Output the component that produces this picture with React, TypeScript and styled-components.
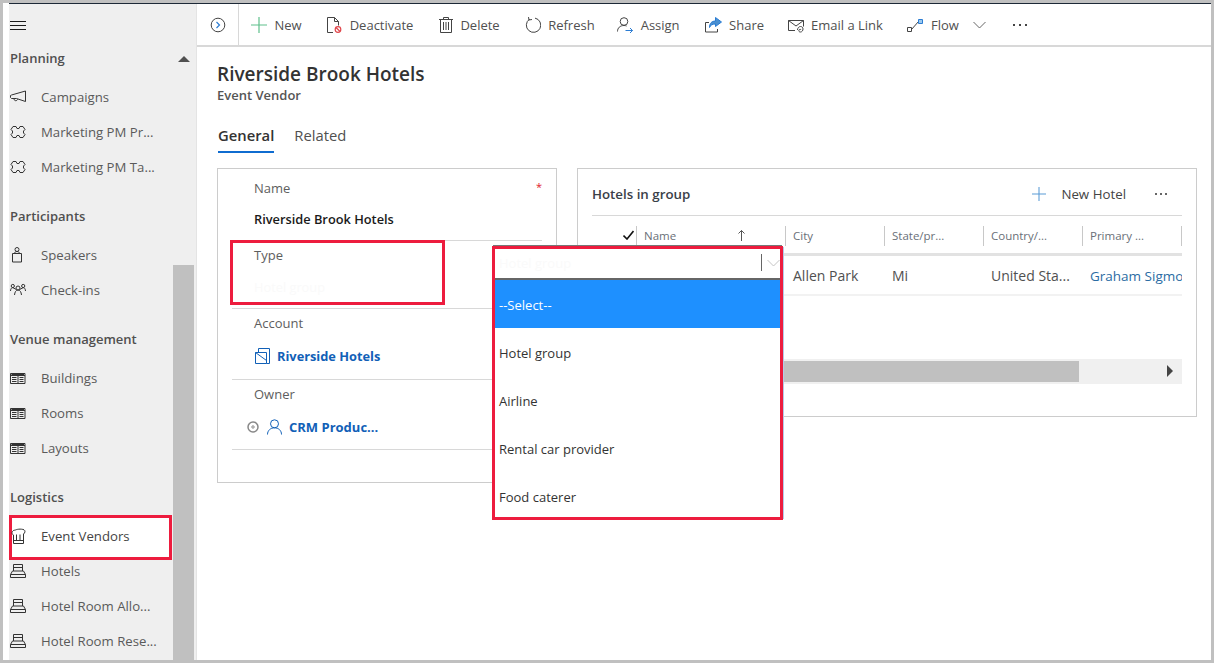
import { FC, ReactNode } from "react";
import styled, { createGlobalStyle } from "styled-components";

const FONT = `"Open Sans", "Noto Sans", sans-serif`;
const RED = "#ed1c3e";

const GlobalStyle = createGlobalStyle`
  html, body {
    margin: 0;
    padding: 0;
    background: #fff;
  }
  * {
    box-sizing: border-box;
  }
`;

const Frame = styled.div`
  width: 1214px;
  height: 663px;
  border: 3px solid #c0c0c0;
  padding-left: 6px;
  background: #fff;
  font-family: ${FONT};
  overflow: hidden;
`;
const Shell = styled.div`
  display: grid;
  grid-template-columns: 188px 1fr;
  height: 100%;
  border-top: 1px solid #1c2836;
`;

/* sidebar */
const Sidebar = styled.aside`
  display: flex;
  background: #efefef;
  height: 656px;
  overflow: hidden;
`;
const SideNav = styled.nav`
  width: 164px;
  flex: none;
`;
const Burger = styled.div`
  height: 36px;
  padding: 13px 0 0 1px;
  color: #1a1a1a;
`;
const Group = styled.section`
  margin-bottom: 14px;
`;
const GroupTitle = styled.div`
  height: 36px;
  line-height: 36px;
  margin-bottom: 3px;
  padding-left: 1px;
  font-size: 13px;
  font-weight: 600;
  color: #505050;
`;
const NavRow = styled.div<{ $active?: boolean }>`
  position: relative;
  display: flex;
  align-items: center;
  gap: 15px;
  height: 35px;
  padding-left: 1px;
  font-size: 13.2px;
  color: #5a5a5a;
  white-space: nowrap;
  svg {
    position: relative;
    color: #333;
  }
  span {
    position: relative;
  }
  ${(p) =>
    p.$active &&
    `
    color: #444;
    &::before {
      content: "";
      position: absolute;
      top: -3px;
      left: 0;
      right: 1px;
      height: 39px;
      background: #fff;
      border: 3px solid ${RED};
    }
  `}
`;
const ScrollTrack = styled.div`
  width: 21px;
  margin: 36px 3px 0 0;
  display: flex;
  flex-direction: column;
  align-items: center;
`;
const ArrowUp = styled.div`
  margin-top: 16px;
  border-left: 6px solid transparent;
  border-right: 6px solid transparent;
  border-bottom: 6px solid #505050;
`;
const ScrollThumb = styled.div`
  margin-top: auto;
  width: 100%;
  height: 395px;
  flex: none;
  background: #c0c0c0;
`;

/* command bar */
const Main = styled.main`
  min-width: 0;
  border-left: 1px solid #e4e4e4;
  margin-left: -1px;
`;
const Toolbar = styled.div`
  display: flex;
  align-items: center;
  height: 43px;
  border-bottom: 2px solid #d8d8d8;
  font-size: 13px;
  color: #505050;
`;
const CollapseCell = styled.div`
  width: 42px;
  height: 41px;
  display: flex;
  align-items: center;
  justify-content: center;
  border-right: 1px solid #d8d8d8;
`;
const ToolItems = styled.div`
  display: flex;
  align-items: center;
  padding-left: 12px;
`;
const ToolItem = styled.div<{ $trail: number }>`
  display: flex;
  align-items: center;
  gap: 7.5px;
  margin-right: ${(p) => p.$trail}px;
  white-space: nowrap;
`;
const MoreItem = styled.div`
  display: flex;
  margin-left: 27px;
`;

/* page */
const Body = styled.div`
  padding: 15px 14px 0 20px;
`;
const Title = styled.h1`
  margin: 0;
  font-size: 19px;
  line-height: 25px;
  font-weight: 600;
  color: #333;
`;
const Subtitle = styled.div`
  font-size: 13px;
  line-height: 16px;
  font-weight: 600;
  color: #555;
`;
const Tabs = styled.div`
  display: flex;
  gap: 20px;
  margin: 22px 0 15px 1px;
`;
const Tab = styled.div<{ $active?: boolean }>`
  height: 28px;
  line-height: 20px;
  font-size: 14.8px;
  font-weight: ${(p) => (p.$active ? 600 : 400)};
  color: ${(p) => (p.$active ? "#333" : "#505050")};
  border-bottom: 2px solid ${(p) => (p.$active ? "#0f6cd0" : "transparent")};
`;
const Cards = styled.div`
  position: relative;
  display: grid;
  grid-template-columns: 340px 620px;
  gap: 20px;
  align-items: start;
`;
const FormCard = styled.div`
  position: relative;
  height: 315px;
  border: 1px solid #cccccc;
  padding: 5px 14px 0;
`;
const Required = styled.span`
  position: absolute;
  top: 11px;
  right: 14px;
  color: #e0202c;
  font-size: 11px;
  line-height: 14px;
`;
const Field = styled.div<{ $height: number }>`
  position: relative;
  height: ${(p) => p.$height}px;
  padding: 5px 0 0 22px;
  border-bottom: 1px solid #d8d8d8;
`;
const Label = styled.div`
  font-size: 13px;
  line-height: 18px;
  color: #5e5e5e;
`;
const Value = styled.div`
  display: flex;
  align-items: center;
  margin-top: 13px;
  height: 18px;
  font-size: 12.8px;
  font-weight: 600;
  color: #1a1a1a;
`;
const FaintValue = styled(Value)`
  margin-top: 14px;
  font-weight: 400;
  color: #fafafa;
`;
const LinkValue = styled(Value)`
  margin: 15px 0 0 1px;
  gap: 7px;
  font-weight: 700;
  color: #1160b7;
`;
const OwnerValue = styled(LinkValue)`
  margin-left: -7px;
  gap: 7.5px;
  font-size: 13px;
`;
const TypeHighlight = styled.div`
  position: absolute;
  top: -1px;
  left: -2px;
  width: 215px;
  height: 65px;
  border: 3px solid ${RED};
`;

/* sub grid */
const GridCard = styled.div`
  height: 249px;
  border: 1px solid #cccccc;
  padding: 0 14px;
`;
const GridHeader = styled.div`
  display: flex;
  align-items: center;
  justify-content: space-between;
  height: 47px;
  padding: 3px 15px 0 0;
  border-bottom: 1px solid #d8d8d8;
`;
const GridTitle = styled.div`
  font-size: 13.3px;
  font-weight: 600;
  color: #3a4048;
`;
const GridActions = styled.div`
  display: flex;
  align-items: center;
  font-size: 13.3px;
  color: #444;
`;
const NewHotel = styled.span`
  margin: 0 29px 0 15px;
`;
const GridRow = styled.div`
  display: grid;
  grid-template-columns: 45px 149px 99px 99px 99px 99px;
  width: 590px;
  overflow: hidden;
`;
const HeadRow = styled(GridRow)`
  height: 40px;
  padding-top: 10px;
  border-bottom: 3px solid #e2e2e2;
`;
const HeadCell = styled.div`
  display: flex;
  align-items: center;
  justify-content: space-between;
  height: 20px;
  padding: 0 40px 2px 7px;
  border-right: 1px solid #c8c8c8;
  font-size: 11.5px;
  color: #6a7078;
  white-space: nowrap;
`;
const PlainHead = styled(HeadCell)`
  padding-right: 0;
`;
const CheckHead = styled(HeadCell)`
  justify-content: flex-end;
  padding: 0 2px 2px 0;
  color: #111;
`;
const BodyRow = styled(GridRow)`
  height: 40px;
  align-items: center;
  padding-top: 1px;
  border-bottom: 2px solid #f2f2f2;
  font-size: 14px;
  color: #505050;
`;
const Cell = styled.div`
  padding-left: 7px;
  white-space: nowrap;
`;
const LinkCell = styled(Cell)`
  font-size: 13.5px;
  color: #2b6ca3;
`;
const HScroll = styled.div`
  display: flex;
  align-items: center;
  justify-content: space-between;
  height: 25px;
  margin-top: 63px;
  padding: 0 9px 1px 0;
  background: #f0f0f0;
`;
const HThumb = styled.div`
  width: 487px;
  height: 21px;
  background: #c0c0c0;
`;
const ArrowRight = styled.div`
  border-top: 6px solid transparent;
  border-bottom: 6px solid transparent;
  border-left: 6px solid #444;
`;

/* open option set, lies over both cards */
const Dropdown = styled.div`
  position: absolute;
  top: 78px;
  left: 275px;
  width: 291px;
  height: 274px;
  background: #fff;
  border: 3px solid ${RED};
  overflow: hidden;
  box-shadow: 0 -2px 0 -1px #777, 2px 0 0 -1px #b4cbe8;
  font-size: 13px;
  color: #333;
`;
const SelectBox = styled.div`
  display: flex;
  align-items: center;
  height: 31px;
  padding: 0 0 2px 4px;
  border-bottom: 2px solid #666;
  color: #fafafa;
`;
const SelectText = styled.span`
  flex: 1;
`;
const SelectBar = styled.span`
  width: 1px;
  height: 17px;
  margin-right: 5px;
  background: #666;
`;
const Option = styled.div<{ $selected?: boolean }>`
  height: 48px;
  line-height: 50px;
  padding-left: 4px;
  background: ${(p) => (p.$selected ? "#1e90ff" : "#fff")};
  color: ${(p) => (p.$selected ? "#fff" : "#333")};
`;

type IconProps = { children: ReactNode };
const Ico: FC<IconProps> = ({ children }) => (
  <svg width={16} height={16} viewBox="0 0 16 16" fill="none" stroke="currentColor" strokeWidth={1} strokeLinejoin="round" style={{ flex: "none", overflow: "visible" }}>
    {children}
  </svg>
);

const HamburgerIcon = () => (
  <Ico>
    <path d="M0 3.5h16M0 7.5h16M0 11.5h16" />
  </Ico>
);
const MegaphoneIcon = () => (
  <Ico>
    <path d="M15.5 2v10.500L6.500 9.500H1.500L.5 8.500V6.500l1-.5z" />
    <path d="M4 9.500c0 1.500.7 2.200 1.700 2.200s1.800-.6 1.800-1.500" />
  </Ico>
);
const PuzzleIcon = () => (
  <Ico>
    <path d="M3 2.500L6 2.500 7 4.500 9 4.500 10 2.500 13 2.500 15 5.500 13.500 7 13.500 9 15 10.500 13 13.500 10 13.500 9 11.500 7 11.500 6 13.500 3 13.500 1 10.500 2.500 9 2.500 7 1 5.500z" />
  </Ico>
);
const SpeakerIcon = () => (
  <Ico>
    <circle cx="7" cy="2.500" r="2" />
    <path d="M4.500 6.500c0-1.200 1-2 2.500-2s2.500.8 2.500 2M2.500 6.500h9v8.500h-9z" />
  </Ico>
);
const CheckInIcon = () => (
  <Ico>
    <circle cx="8" cy="6" r="2" />
    <circle cx="2.800" cy="4" r="1.600" />
    <circle cx="13.200" cy="4" r="1.600" />
    <path d="M4.500 13c.3-3 1.500-5 3.500-5s3.200 2 3.500 5M.5 9c0-1.800 1-3.400 2.300-3.400L6.300 7.500M15.500 9c0-1.800-1-3.400-2.300-3.400L9.700 7.500" />
  </Ico>
);
const BuildingIcon = () => (
  <Ico>
    <path d="M.5 3.500h14.500v10H.5zM.5 5.500h14.500M8 5.500v8M2 7.500h4.500M2 9.500h4.500M2 11.500h4.500M9.500 7.500h4M9.500 9.500h4M9.500 11.500h4M1.500 4.500h12.500" />
  </Ico>
);
const ChefIcon = () => (
  <Ico>
    <path d="M3.500 15.500V7C2 6.500 1.500 4.500 2.500 3.500c.5-1 1.700-1.500 2.500-1.200 1-1 6-1.800 9-.5 1.500.8 1.200 3-.5 4.200v9.500zM3.500 12.500h10M6.500 6.500v6M10 6.500v6" />
  </Ico>
);
const BedIcon = () => (
  <Ico>
    <path d="M3.500 8V1.500h9V8M3.500 4.500h9M2.500 8h11l2 3.500v3H.5v-3zM.5 11.500h15" />
  </Ico>
);
const CollapseIcon = () => (
  <svg width="16" height="16" viewBox="0 0 16 16" fill="none" stroke="#444">
    <circle cx="8" cy="8" r="6.800" />
    <path d="M6.500 5l3 3-3 3" stroke="#2b7cd3" strokeWidth="1.200" />
  </svg>
);
const PlusIcon: FC<{ color: string; size?: number }> = ({ color, size = 16 }) => (
  <svg width={size} height={size} viewBox="0 0 16 16" fill="none" stroke={color} strokeWidth="1.200" style={{ flex: "none" }}>
    <path d="M8 0v16M0 8h16" />
  </svg>
);
const DeactivateIcon = () => (
  <svg width="16" height="16" viewBox="0 0 16 16" fill="none" stroke="#444">
    <path d="M7 15.500H1.500V.5h7l4 4v4M8.500.5v4h4" />
    <circle cx="12" cy="12.500" r="2.800" stroke="#e0474c" strokeWidth="1.200" />
    <path d="M10 10.500l4 4" stroke="#e0474c" strokeWidth="1.200" />
  </svg>
);
const TrashIcon = () => (
  <svg width="14" height="16" viewBox="0 0 14 16" fill="none" stroke="#444">
    <path d="M0 2.500h14M4.500 2.500V.5h5v2M1.500 2.500v13h11v-13M4.500 5v8M7 5v8M9.500 5v8" />
  </svg>
);
const RefreshIcon = () => (
  <svg width="16" height="16" viewBox="0 0 16 16" fill="none" stroke="#444">
    <path d="M4.500 2.200A7.200 7.200 0 1 0 10 1.100" />
    <path d="M4 0v3h3" transform="rotate(-10 4 3)" />
  </svg>
);
const AssignIcon = () => (
  <svg width="16" height="16" viewBox="0 0 16 16" fill="none" stroke="#444">
    <circle cx="7" cy="4.500" r="3.800" />
    <path d="M.5 14.500c0-3.500 2.500-6 6.500-6 1 0 1.900.2 2.600.5" />
    <path d="M8.500 13.500h7M13 11l2.500 2.500L13 16" stroke="#2b7cd3" />
  </svg>
);
const ShareIcon = () => (
  <svg width="17" height="16" viewBox="0 0 17 16" fill="none" stroke="#444">
    <path d="M4 5.500H.5v9.500h12v-3" />
    <path d="M10.500 0.500l6 4.500-6 4.500V7c-3 0-5 1-6 3.500 0-4 2-6.500 6-6.500z" fill="#4a8fd0" stroke="#2b7cd3" />
  </svg>
);
const EmailIcon = () => (
  <svg width="16" height="16" viewBox="0 0 16 16" fill="none" stroke="#444">
    <path d="M7 13.500H.5v-10h15v6M.5 3.500L8 9l7.500-5.500" />
    <path d="M9.500 13c0-2 1.500-3.500 3-3.500s2.500 1 2.500 2.500-1 3-2.500 3-2-1-1.500-2 2-.8 2 0" />
  </svg>
);
const FlowIcon = () => (
  <svg width="16" height="16" viewBox="0 0 16 16" fill="none" stroke="#444">
    <path d="M.5 10.500h4v4h-4zM4.500 12.500l7-8" />
    <path d="M11.500 2.500h4v4h-4z" fill="#9cc9ee" stroke="#2b7cd3" />
  </svg>
);
const ChevronDown: FC<{ color: string }> = ({ color }) => (
  <svg width="13" height="8" viewBox="0 0 13 8" fill="none" stroke={color}>
    <path d="M.5 1l6 6 6-6" />
  </svg>
);
const DotsIcon: FC<{ color: string; width: number }> = ({ color, width }) => (
  <svg width={width} height="2" viewBox={`0 0 ${width} 2`} fill={color}>
    <rect x="0" width="2" height="2" />
    <rect x={(width - 2) / 2} width="2" height="2" />
    <rect x={width - 2} width="2" height="2" />
  </svg>
);
const CheckIcon = () => (
  <svg width="11" height="10" viewBox="0 0 11 10" fill="none" stroke="#111" strokeWidth="1.600">
    <path d="M.5 5.500L4 9l6.500-8" />
  </svg>
);
const SortUpIcon = () => (
  <svg width="7" height="11" viewBox="0 0 7 11" fill="none" stroke="#555">
    <path d="M3.500 11V.5M.5 3.500l3-3 3 3" />
  </svg>
);
const AccountIcon = () => (
  <svg width="15" height="16" viewBox="0 0 15 16" fill="none" stroke="#1160b7" style={{ flex: "none" }}>
    <path d="M.5 4.500h11v11H.5zM3.500 4.500V.5h11v15h-3M.5 4.500l11 8" />
  </svg>
);
const PersonIcon = () => (
  <svg width="15" height="16" viewBox="0 0 15 16" fill="none" stroke="#1160b7" style={{ flex: "none" }}>
    <circle cx="7.500" cy="4.800" r="4" />
    <path d="M.5 15.500c0-4 3-6.700 7-6.700s7 2.700 7 6.700" />
  </svg>
);
const LockedIcon = () => (
  <svg width="12" height="12" viewBox="0 0 12 12" fill="none" stroke="#888" style={{ flex: "none" }}>
    <circle cx="6" cy="6" r="5" strokeWidth="1.500" />
    <circle cx="6" cy="6" r="1.200" />
  </svg>
);

const navGroups = [
  {
    title: "Planning",
    items: [
      { label: "Campaigns", icon: <MegaphoneIcon /> },
      { label: "Marketing PM Pr...", icon: <PuzzleIcon /> },
      { label: "Marketing PM Ta...", icon: <PuzzleIcon /> },
    ],
  },
  {
    title: "Participants",
    items: [
      { label: "Speakers", icon: <SpeakerIcon /> },
      { label: "Check-ins", icon: <CheckInIcon /> },
    ],
  },
  {
    title: "Venue management",
    items: [
      { label: "Buildings", icon: <BuildingIcon /> },
      { label: "Rooms", icon: <BuildingIcon /> },
      { label: "Layouts", icon: <BuildingIcon /> },
    ],
  },
  {
    title: "Logistics",
    items: [
      { label: "Event Vendors", icon: <ChefIcon />, active: true },
      { label: "Hotels", icon: <BedIcon /> },
      { label: "Hotel Room Allo...", icon: <BedIcon /> },
      { label: "Hotel Room Rese...", icon: <BedIcon /> },
    ],
  },
];

const tools = [
  { label: "New", icon: <PlusIcon color="#5fc08c" />, trail: 24.5 },
  { label: "Deactivate", icon: <DeactivateIcon />, trail: 25.5 },
  { label: "Delete", icon: <TrashIcon />, trail: 25 },
  { label: "Refresh", icon: <RefreshIcon />, trail: 22.5 },
  { label: "Assign", icon: <AssignIcon />, trail: 25 },
  { label: "Share", icon: <ShareIcon />, trail: 23.5 },
  { label: "Email a Link", icon: <EmailIcon />, trail: 24.5 },
  { label: "Flow", icon: <FlowIcon />, trail: 14.5 },
];

const options = ["--Select--", "Hotel group", "Airline", "Rental car provider", "Food caterer"];

export default function App() {
  return (
    <>
      <GlobalStyle />
      <Frame>
        <Shell>
          <Sidebar>
            <SideNav>
              <Burger>
                <HamburgerIcon />
              </Burger>
              {navGroups.map((group) => (
                <Group key={group.title}>
                  <GroupTitle>{group.title}</GroupTitle>
                  {group.items.map((item) => (
                    <NavRow key={item.label} $active={"active" in item}>
                      {item.icon}
                      <span>{item.label}</span>
                    </NavRow>
                  ))}
                </Group>
              ))}
            </SideNav>
            <ScrollTrack>
              <ArrowUp />
              <ScrollThumb />
            </ScrollTrack>
          </Sidebar>
          <Main>
            <Toolbar>
              <CollapseCell>
                <CollapseIcon />
              </CollapseCell>
              <ToolItems>
                {tools.map((tool) => (
                  <ToolItem key={tool.label} $trail={tool.trail}>
                    {tool.icon}
                    {tool.label}
                  </ToolItem>
                ))}
                <ChevronDown color="#666" />
                <MoreItem>
                  <DotsIcon color="#444" width={14} />
                </MoreItem>
              </ToolItems>
            </Toolbar>
            <Body>
              <Title>Riverside Brook Hotels</Title>
              <Subtitle>Event Vendor</Subtitle>
              <Tabs>
                <Tab $active>General</Tab>
                <Tab>Related</Tab>
              </Tabs>
              <Cards>
                <FormCard>
                  <Required>*</Required>
                  <Field $height={67}>
                    <Label>Name</Label>
                    <Value>Riverside Brook Hotels</Value>
                  </Field>
                  <Field $height={68}>
                    <Label>Type</Label>
                    <FaintValue>Hotel group</FaintValue>
                    <TypeHighlight />
                  </Field>
                  <Field $height={71}>
                    <Label>Account</Label>
                    <LinkValue>
                      <AccountIcon />
                      Riverside Hotels
                    </LinkValue>
                  </Field>
                  <Field $height={70}>
                    <Label>Owner</Label>
                    <OwnerValue>
                      <LockedIcon />
                      <PersonIcon />
                      CRM Produc...
                    </OwnerValue>
                  </Field>
                </FormCard>
                <GridCard>
                  <GridHeader>
                    <GridTitle>Hotels in group</GridTitle>
                    <GridActions>
                      <PlusIcon color="#5a9bd5" size={14} />
                      <NewHotel>New Hotel</NewHotel>
                      <DotsIcon color="#666" width={12} />
                    </GridActions>
                  </GridHeader>
                  <HeadRow>
                    <CheckHead>
                      <CheckIcon />
                    </CheckHead>
                    <HeadCell>
                      Name
                      <SortUpIcon />
                    </HeadCell>
                    <PlainHead>City</PlainHead>
                    <PlainHead>State/pr...</PlainHead>
                    <PlainHead>Country/...</PlainHead>
                    <PlainHead>Primary ...</PlainHead>
                  </HeadRow>
                  <BodyRow>
                    <Cell />
                    <Cell />
                    <Cell>Allen Park</Cell>
                    <Cell>Mi</Cell>
                    <Cell>United Sta...</Cell>
                    <LinkCell>Graham Sigmo</LinkCell>
                  </BodyRow>
                  <HScroll>
                    <HThumb />
                    <ArrowRight />
                  </HScroll>
                </GridCard>
                <Dropdown>
                  <SelectBox>
                    <SelectText>Hotel group</SelectText>
                    <SelectBar />
                    <ChevronDown color="#c4c4c4" />
                  </SelectBox>
                  {options.map((option, i) => (
                    <Option key={option} $selected={i === 0}>
                      {option}
                    </Option>
                  ))}
                </Dropdown>
              </Cards>
            </Body>
          </Main>
        </Shell>
      </Frame>
    </>
  );
}
